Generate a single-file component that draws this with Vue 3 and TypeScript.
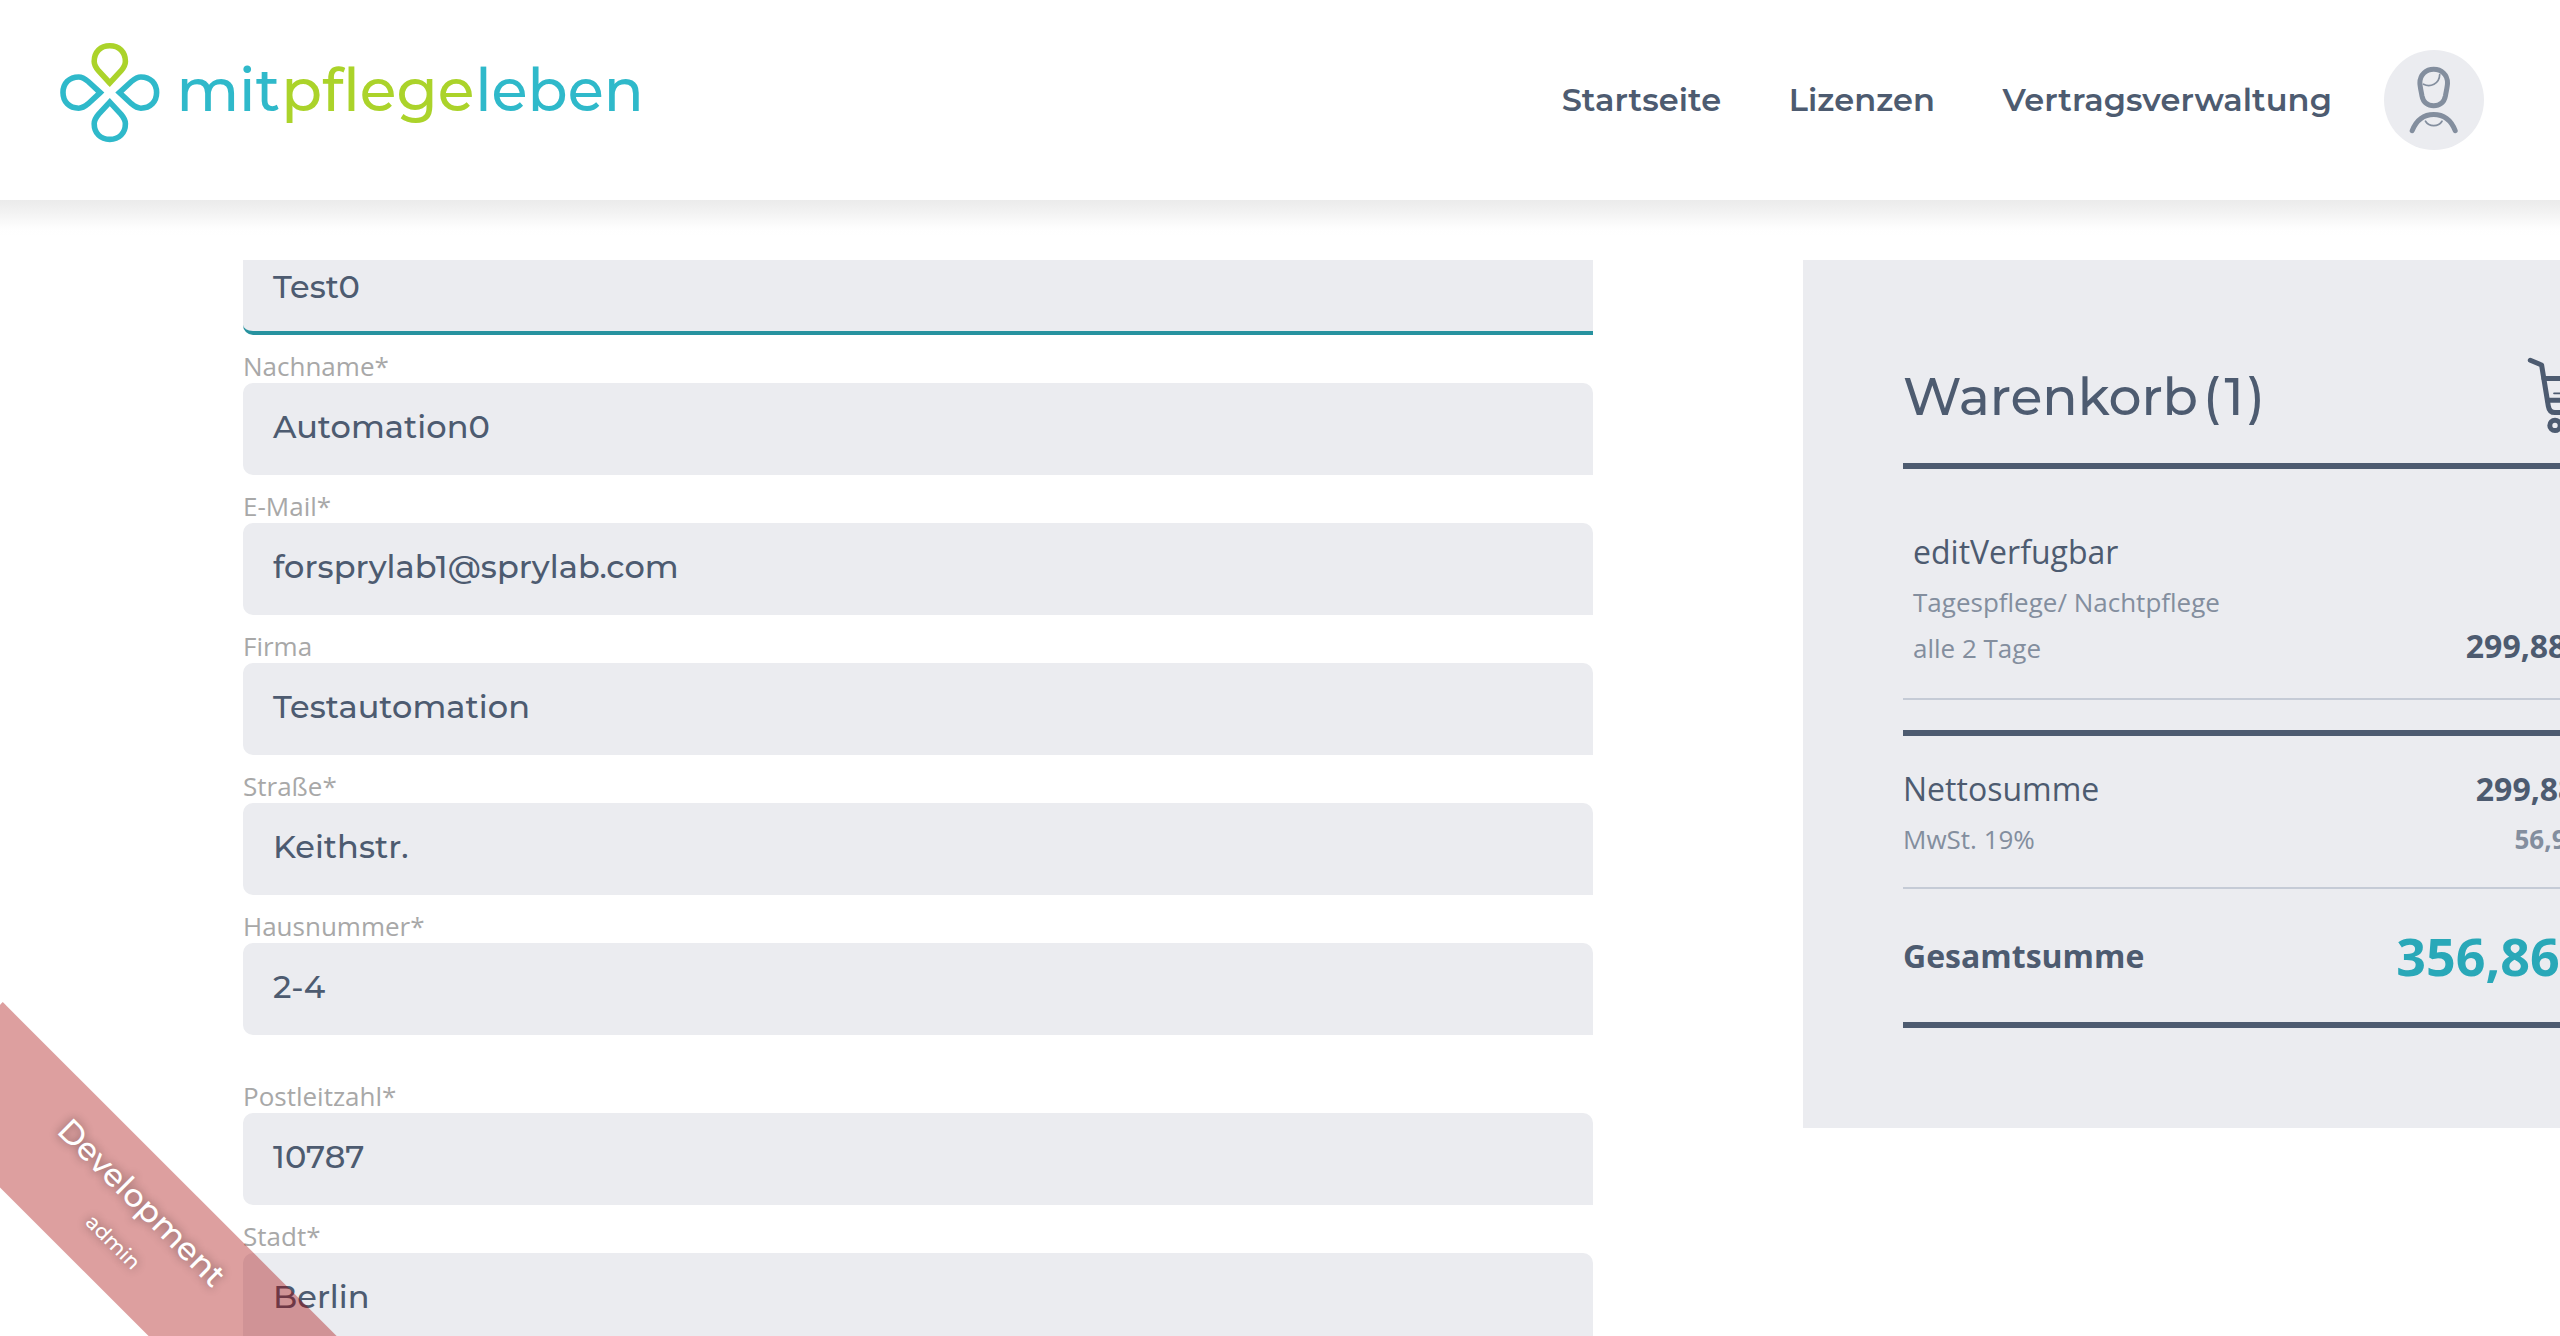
<script setup lang="ts">
interface Field {
  label?: string
  value: string
  focused?: boolean
  spaced?: boolean
}

const navItems: string[] = ['Startseite', 'Lizenzen', 'Vertragsverwaltung']

const fields: Field[] = [
  { value: 'Test0', focused: true },
  { label: 'Nachname*', value: 'Automation0' },
  { label: 'E-Mail*', value: 'forsprylab1@sprylab.com' },
  { label: 'Firma', value: 'Testautomation' },
  { label: 'Straße*', value: 'Keithstr.' },
  { label: 'Hausnummer*', value: '2-4' },
  { label: 'Postleitzahl*', value: '10787', spaced: true },
  { label: 'Stadt*', value: 'Berlin' },
]

const petal =
  'M109.8 83 L98.7 71 C95.6 67.4 94.2 65 94.2 61.5 C94.2 52 100.6 45.8 109.8 45.8 C119 45.8 125.4 52 125.4 61.5 C125.4 65 124 67.4 120.9 71 Z'
</script>

<template>
  <div class="page">
    <header class="header">
      <svg class="logo" width="660" height="200" viewBox="0 0 660 200">
        <g fill="none" stroke="#2fb9ca" stroke-width="5.6">
          <path :d="petal" stroke="#abd32a" />
          <path :d="petal" transform="rotate(90 109.8 92.6)" />
          <path :d="petal" transform="rotate(180 109.8 92.6)" />
          <path :d="petal" transform="rotate(270 109.8 92.6)" />
        </g>
        <g class="wordmark">
          <text x="176.4" y="110.7" textLength="103.6" lengthAdjust="spacingAndGlyphs">mit</text>
          <text class="green" x="281.2" y="110.7" textLength="193.3" lengthAdjust="spacingAndGlyphs">pflege</text>
          <text x="475.2" y="110.7" textLength="168.6" lengthAdjust="spacingAndGlyphs">leben</text>
        </g>
      </svg>
      <nav class="nav">
        <a v-for="item in navItems" :key="item" class="nav-link">{{ item }}</a>
        <span class="avatar">
          <svg width="100" height="100" viewBox="0 0 100 100" fill="none" stroke="#838e9e" stroke-width="5" stroke-linecap="round">
            <path d="M35.9 33 C35.9 24.5 42 19.3 49.7 19.3 S63.5 24.5 63.5 33 C63.5 36.5 62.2 41 61.4 46 C60.2 52.5 55.5 55.8 49.7 55.8 S39.2 52.5 38 46 C37.2 41 35.9 36.5 35.9 33 Z" />
            <path d="M39.5 34.2 C46 37.6 55.5 34 55.7 24.5" stroke-width="1.7" />
            <path d="M28.2 80.6 C32.5 70 40 64.5 49.7 64.5 S67 70 71.2 80.6" />
            <path d="M41.5 71.2 C45 77 54.5 77 58 71.2" stroke-width="1.7" />
          </svg>
        </span>
      </nav>
    </header>
    <div class="header-shade"></div>

    <main class="content">
      <form class="form">
        <div v-for="f in fields" :key="f.value" class="field" :class="{ spaced: f.spaced }">
          <label v-if="f.label" class="label">{{ f.label }}</label>
          <div class="input" :class="{ focused: f.focused }">{{ f.value }}</div>
        </div>
      </form>

      <aside class="cart">
        <div class="cart-head">
          <div class="cart-title">
            <span>Warenkorb</span>
            <span class="count">(1)</span>
          </div>
          <svg class="cart-icon" width="78" height="80" viewBox="2525 355 78 80" fill="none" stroke="#4d5b70" stroke-width="5" stroke-linecap="round" stroke-linejoin="round">
            <path d="M2530.3 360.3 L2541.6 365 L2548.3 406 Q2549.3 412.6 2555 412.6 H2592" />
            <path d="M2544 378.4 H2600 L2595 400.3 H2547.5" />
            <path d="M2554 393.3 H2590" stroke-width="1.7" />
            <circle cx="2555" cy="425.4" r="5.2" />
            <circle cx="2588" cy="425.4" r="5.2" />
          </svg>
        </div>

        <div class="item">
          <div class="item-name">editVerfugbar</div>
          <div class="item-meta">Tagespflege/ Nachtpflege</div>
          <div class="item-row">
            <span class="item-meta">alle 2 Tage</span>
            <span class="price">299,88 €</span>
          </div>
        </div>

        <div class="totals">
          <div class="row net"><span>Nettosumme</span><strong>299,88 €</strong></div>
          <div class="row vat"><span>MwSt. 19%</span><strong>56,98 €</strong></div>
        </div>
        <div class="row grand"><strong>Gesamtsumme</strong><strong class="sum">356,86 €</strong></div>
      </aside>
    </main>

    <div class="ribbon">
      <svg width="482" height="133.4" viewBox="-241 -66.7 482 133.4">
        <text class="env" x="-112" y="-12.2">Development</text>
        <text class="role" x="-27" y="32">admin</text>
      </svg>
    </div>
  </div>
</template>

<style>
body {
  margin: 0;
  overflow: hidden;
}
</style>

<style scoped>
.page {
  position: relative;
  width: 2560px;
  height: 1336px;
  overflow: hidden;
  display: flex;
  flex-direction: column;
  background: #fff;
  color: #4d5b70;
  font-family: 'Open Sans', sans-serif;
}

svg {
  display: block;
  flex: none;
  overflow: visible;
}

svg text,
.nav-link,
.input,
.cart-title {
  font-family: Montserrat, Inter, sans-serif;
}

.header {
  flex: none;
  height: 200px;
  display: flex;
  justify-content: space-between;
  background: #fff;
}

.header-shade {
  flex: none;
  height: 60px;
  background: linear-gradient(#ebebeb, #f1f1f1 10px, #f8f8f8 20px, #fefefe 29px, #fff 36px);
}

.wordmark text {
  font-size: 59px;
  font-weight: 500;
  fill: #2fb9ca;
}

.wordmark .green {
  fill: #abd32a;
}

.nav {
  display: flex;
  align-items: center;
  margin-right: 76px;
}

.nav-link {
  margin-right: 67.5px;
  font-size: 32px;
  font-weight: 600;
  line-height: 38px;
  letter-spacing: 0.1px;
}

.nav-link:nth-child(3) {
  margin-right: 52px;
}

.avatar {
  width: 100px;
  height: 100px;
  border-radius: 50%;
  background: #ebecf0;
}

.content {
  flex: none;
  width: 2703px;
  height: 1076px;
  display: flex;
  align-items: flex-start;
  overflow: hidden;
}

.form {
  width: 1350px;
  margin: -17px 210px 0 243px;
}

.field.spaced {
  padding-top: 30px;
}

.label {
  display: block;
  padding-top: 14px;
  font-size: 26px;
  line-height: 34px;
  color: #a8a8a8;
}

.input {
  box-sizing: border-box;
  height: 92px;
  padding: 0 30px;
  border-radius: 10px 10px 0 10px;
  background: #ebecf0;
  font-size: 32px;
  font-weight: 500;
  line-height: 87px;
  letter-spacing: 0.05px;
}

.input.focused {
  border-bottom: 4px solid #27929f;
}

.cart {
  box-sizing: border-box;
  width: 900px;
  height: 868px;
  padding: 0 100px;
  background: #ebecf0;
}

.cart-head {
  box-sizing: border-box;
  height: 209px;
  padding-top: 95px;
  display: flex;
  justify-content: space-between;
  border-bottom: 6px solid #4d5b70;
}

.cart-title {
  display: flex;
  gap: 5px;
  margin-top: 10px;
  font-size: 52px;
  font-weight: 500;
  line-height: 64px;
}

.count {
  letter-spacing: 3.5px;
}

.item {
  box-sizing: border-box;
  height: 231px;
  padding: 60px 10px 0;
  border-bottom: 2px solid #c5cbd6;
}

.item-name {
  margin-bottom: 9px;
  font-size: 32px;
  line-height: 46px;
}

.item-meta {
  font-size: 26px;
  line-height: 36px;
  color: #838e9e;
}

.item-row {
  display: flex;
  justify-content: space-between;
  align-items: baseline;
  margin-top: 3px;
}

.price {
  font-size: 32px;
  font-weight: 700;
  line-height: 46px;
}

.totals {
  box-sizing: border-box;
  height: 159px;
  margin-top: 30px;
  padding-top: 30px;
  border-top: 6px solid #4d5b70;
  border-bottom: 2px solid #c5cbd6;
}

.row {
  display: flex;
  justify-content: space-between;
}

.net {
  margin-bottom: 9px;
  font-size: 32px;
  line-height: 46px;
}

.vat {
  font-size: 26px;
  line-height: 36px;
  color: #838e9e;
}

.grand {
  box-sizing: border-box;
  height: 139px;
  padding-top: 32px;
  font-size: 32px;
  line-height: 70px;
  border-bottom: 6px solid #4d5b70;
}

.sum {
  font-size: 52px;
  color: #29a8b8;
}

.ribbon {
  position: absolute;
  left: -115.5px;
  top: 1152.8px;
  width: 482px;
  height: 133.4px;
  background: rgba(164, 0, 0, 0.376);
  transform: rotate(45deg);
}

.ribbon text {
  fill: #fff;
  font-weight: 500;
  text-shadow: 0 0 10px rgba(0, 0, 0, 0.45);
}

.env {
  font-size: 32px;
}

.role {
  font-size: 20.5px;
}
</style>
